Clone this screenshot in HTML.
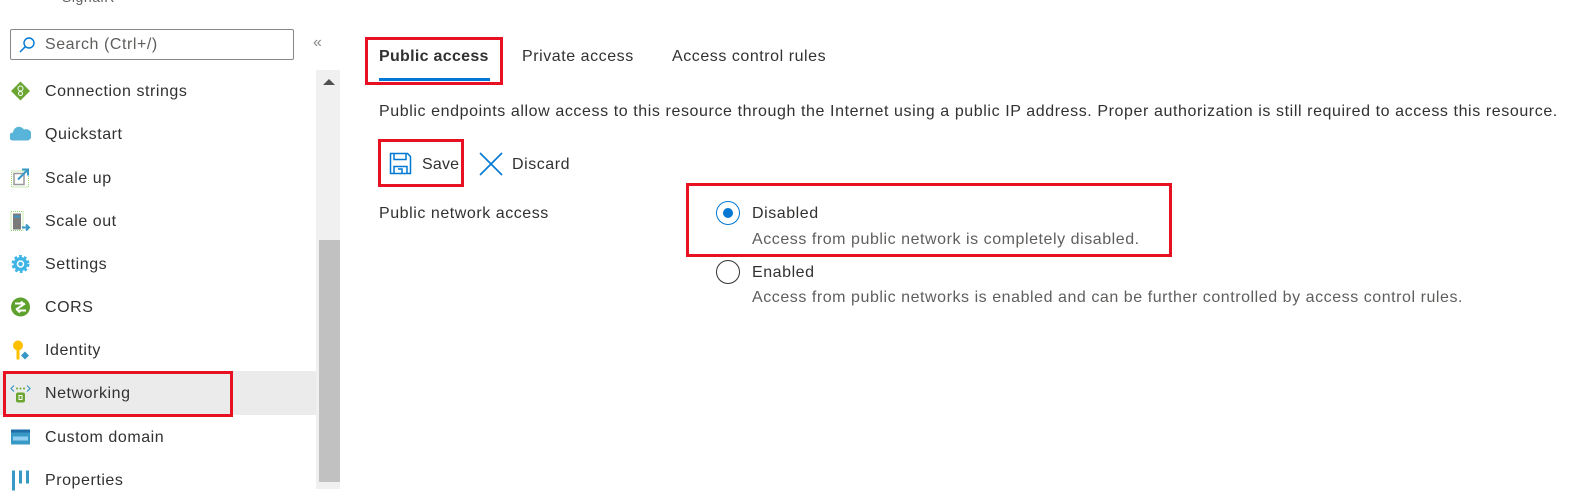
<!DOCTYPE html>
<html><head><style>
*{margin:0;padding:0;box-sizing:border-box}
body{width:1572px;height:489px;background:#fff;font-family:"Liberation Sans",sans-serif;color:#323130;position:relative;overflow:hidden;font-size:16px;letter-spacing:0.55px}
.a{position:absolute;white-space:nowrap}
.red{position:absolute;border:3px solid #e81123}
.it{position:absolute;left:45px;transform:translateY(-50%);white-space:nowrap;margin-top:1px}
.ic{position:absolute;left:10px;width:21px;height:21px;transform:translateY(-50%)}
</style></head><body>
<div class="a" style="left:62px;top:-11px;color:#605e5c;font-size:14px">SignalR</div>
<div class="a" style="left:10px;top:29px;width:284px;height:31px;border:1px solid #8a8886;border-radius:2px"></div>
<svg class="a" style="left:18px;top:36px" width="18" height="18" viewBox="0 0 18 18"><circle cx="11" cy="7" r="5" fill="none" stroke="#0078d4" stroke-width="1.4"/><path d="M7.3 10.7 2 16" stroke="#0078d4" stroke-width="1.5"/></svg>
<div class="a" style="left:45px;top:36px;color:#605e5c">Search (Ctrl+/)</div>
<div class="a" style="left:313px;top:34px;color:#8a8886;font-size:16px">«</div>
<div class="a" style="left:316px;top:70px;width:24px;height:419px;background:#f0f0f0"></div>
<div class="a" style="left:319px;top:240px;width:21px;height:242px;background:#c1c1c1"></div>
<svg class="a" style="left:323px;top:78px" width="12" height="8"><path d="M0 7 6 1 12 7z" fill="#505050"/></svg>
<div class="a" style="left:0;top:371px;width:316px;height:44px;background:#ebebeb"></div>
<div class="red" style="left:3px;top:371px;width:230px;height:46px"></div>

<svg class="ic" style="top:91px" viewBox="0 0 21 21"><path d="M10.5 1 20 10.5 10.5 20 1 10.5z" fill="#6aa631"/><circle cx="10.5" cy="8" r="2.5" fill="none" stroke="#fff"/><circle cx="10.5" cy="13" r="2" fill="none" stroke="#fff"/></svg>
<div class="it" style="top:91px">Connection strings</div>
<svg class="ic" style="top:134px" viewBox="0 0 21 21"><path d="M3 17a4 4 0 0 1 0-8 6 6 0 0 1 11-3 5 5 0 0 1 4 11z" fill="#59b4d9"/></svg>
<div class="it" style="top:134px">Quickstart</div>
<svg class="ic" style="top:178px" viewBox="0 0 21 21"><rect x="1.5" y="3.5" width="17" height="16" fill="none" stroke="#8fd16b" stroke-dasharray="1 1"/><rect x="4" y="6" width="10" height="11" fill="none" stroke="#999" stroke-width="1.5"/><path d="M8 12 18 2M12 2h6v6" stroke="#3999c6" stroke-width="2" fill="none"/></svg>
<div class="it" style="top:178px">Scale up</div>
<svg class="ic" style="top:221px" viewBox="0 0 21 21"><rect x="1" y="1" width="12" height="19" fill="none" stroke="#8fd16b" stroke-dasharray="1 1"/><rect x="3" y="3" width="8" height="16" fill="#7a7a7a"/><rect x="4" y="5" width="6" height="2" fill="#3999c6"/><path d="M12 17h7M16 14l3 3-3 3" stroke="#3999c6" stroke-width="2" fill="none"/></svg>
<div class="it" style="top:221px">Scale out</div>
<svg class="ic" style="top:264px" viewBox="0 0 21 21"><circle cx="10.5" cy="10.5" r="7" fill="#3fb5e5" stroke="#3fb5e5" stroke-width="4" stroke-dasharray="2.5 2"/><circle cx="10.5" cy="10.5" r="3" fill="none" stroke="#fff" stroke-width="1.5"/></svg>
<div class="it" style="top:264px">Settings</div>
<svg class="ic" style="top:307px" viewBox="0 0 21 21"><circle cx="10.5" cy="10.5" r="9.5" fill="#5ea12d"/><path d="M5 7h8l-2-2M16 14H8l2 2M6 13l9-6" stroke="#fff" stroke-width="2" fill="none"/></svg>
<div class="it" style="top:307px">CORS</div>
<svg class="ic" style="top:350px" viewBox="0 0 21 21"><circle cx="8" cy="6" r="5" fill="#ffc000"/><rect x="6.5" y="9" width="3" height="11" fill="#ffc000"/><path d="M15 12l4 4-4 4-4-4z" fill="#3999c6"/></svg>
<div class="it" style="top:350px">Identity</div>
<svg class="ic" style="top:393px" viewBox="0 0 21 21"><path d="M4 3 1 6l3 3M17 3l3 3-3 3" stroke="#3999c6" fill="none" stroke-width="1.2"/><circle cx="7" cy="6" r="1" fill="#6aa631"/><circle cx="10.5" cy="6" r="1" fill="#6aa631"/><circle cx="14" cy="6" r="1" fill="#6aa631"/><rect x="6" y="10" width="9" height="10" rx="2" fill="#6aa631"/><rect x="9" y="13" width="3" height="4" fill="none" stroke="#fff"/></svg>
<div class="it" style="top:393px">Networking</div>
<svg class="ic" style="top:437px" viewBox="0 0 21 21"><rect x="1" y="3" width="19" height="15" fill="#3999c6"/><rect x="1" y="3" width="19" height="3" fill="#1e6ea7"/><rect x="3" y="10" width="15" height="4" fill="#8fd0f0"/></svg>
<div class="it" style="top:437px">Custom domain</div>
<svg class="ic" style="top:480px" viewBox="0 0 21 21"><rect x="2" y="1" width="3" height="20" fill="#3999c6"/><rect x="9" y="1" width="3" height="13" fill="#3999c6"/><rect x="16" y="1" width="3" height="13" fill="#3999c6"/></svg>
<div class="it" style="top:480px">Properties</div>

<div class="a" style="left:379px;top:48px;font-weight:bold;letter-spacing:0.3px">Public access</div>
<div class="a" style="left:379px;top:78px;width:111px;height:3px;background:#0078d4"></div>
<div class="red" style="left:365px;top:37px;width:138px;height:48px"></div>
<div class="a" style="left:522px;top:48px">Private access</div>
<div class="a" style="left:672px;top:48px">Access control rules</div>
<div class="a" style="left:379px;top:103px;letter-spacing:0.59px">Public endpoints allow access to this resource through the Internet using a public IP address. Proper authorization is still required to access this resource.</div>
<div class="red" style="left:378px;top:139px;width:86px;height:48px"></div>
<svg class="a" style="left:389px;top:152px" width="23" height="23" viewBox="0 0 23 23"><path d="M1.5 1.5h17l3 3v17h-20z" fill="none" stroke="#0078d4" stroke-width="1.5"/><path d="M5 1.5v6h12v-6M5 21.5v-7h13v7M9 17h4v4.5" fill="none" stroke="#0078d4" stroke-width="1.5"/></svg>
<div class="a" style="left:422px;top:156px;letter-spacing:0.2px">Save</div>
<svg class="a" style="left:479px;top:152px" width="24" height="24"><path d="M1 1 23 23M23 1 1 23" stroke="#0078d4" stroke-width="1.6"/></svg>
<div class="a" style="left:512px;top:156px">Discard</div>
<div class="a" style="left:379px;top:205px">Public network access</div>
<div class="red" style="left:686px;top:183px;width:486px;height:74px"></div>
<div class="a" style="left:716px;top:201px;width:24px;height:24px;border:1.5px solid #0078d4;border-radius:50%"></div>
<div class="a" style="left:723px;top:208px;width:10px;height:10px;background:#0078d4;border-radius:50%"></div>
<div class="a" style="left:752px;top:205px">Disabled</div>
<div class="a" style="left:752px;top:231px;color:#605e5c">Access from public network is completely disabled.</div>
<div class="a" style="left:716px;top:260px;width:24px;height:24px;border:1.5px solid #323130;border-radius:50%"></div>
<div class="a" style="left:752px;top:264px">Enabled</div>
<div class="a" style="left:752px;top:289px;color:#605e5c">Access from public networks is enabled and can be further controlled by access control rules.</div>
</body></html>
